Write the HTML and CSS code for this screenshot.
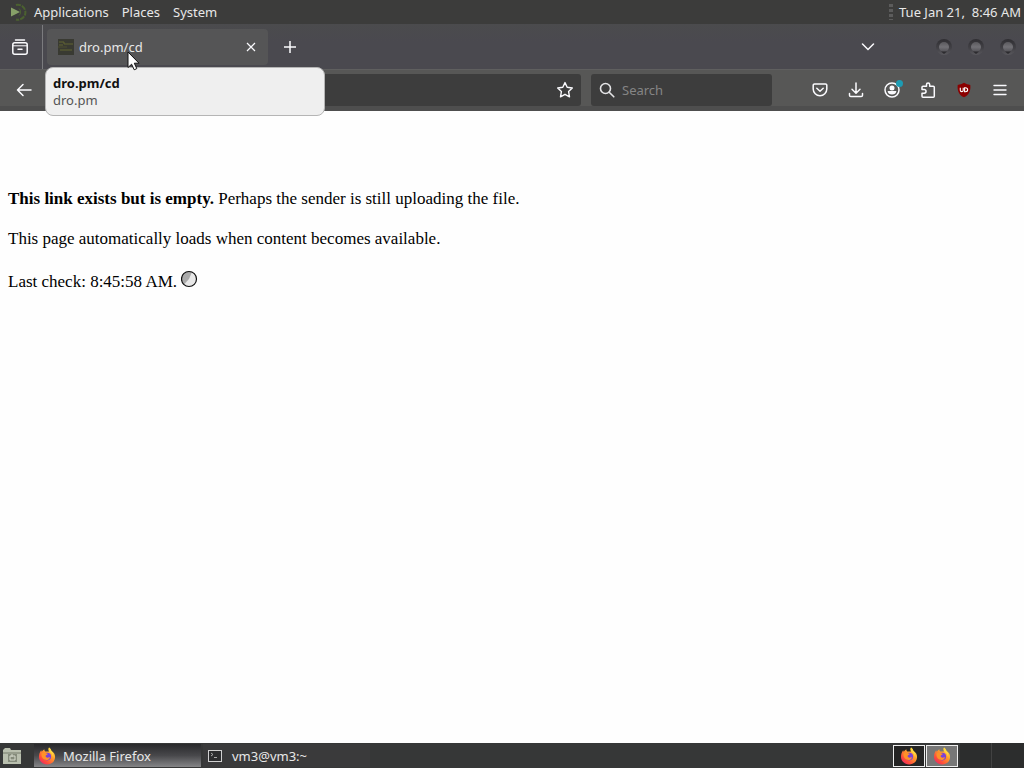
FILE: index.html
```html
<!DOCTYPE html>
<html lang="en">
<head>
    <meta charset="UTF-8">
    <meta name="viewport" content="width=device-width, initial-scale=1.0">
    <title>dro.pm/cd</title>
    <link rel="stylesheet" href="styles.css">
</head>
<body>
    <!-- Shared icons -->
    <svg class="defs" width="0" height="0" aria-hidden="true">
        <defs>
            <linearGradient id="flame" x1="1" y1="0" x2="0.2" y2="1">
                <stop offset="0" stop-color="#fff04a"/>
                <stop offset="0.45" stop-color="#ff9a2b"/>
                <stop offset="0.8" stop-color="#ff4a3c"/>
                <stop offset="1" stop-color="#e6286c"/>
            </linearGradient>
            <linearGradient id="knob" x1="0" y1="0" x2="0" y2="1">
                <stop offset="0" stop-color="#2f2e32"/>
                <stop offset="0.6" stop-color="#434247"/>
                <stop offset="1" stop-color="#59585d"/>
            </linearGradient>
            <linearGradient id="knobface" x1="0" y1="0" x2="0" y2="1">
                <stop offset="0" stop-color="#5a595d"/>
                <stop offset="0.5" stop-color="#727176"/>
                <stop offset="1" stop-color="#504f54"/>
            </linearGradient>
            <symbol id="firefox" viewBox="0 0 18 18">
                <path fill="url(#flame)" d="M11 .6c1.300 1 2 2 2.300 3.100 2.300 1.500 3.800 3.400 3.800 6.200 0 4.300-3.600 7.600-8 7.600S1 14.200 1 9.800C1 7.200 1.700 5 3.200 3.200l.5 1.500C4.500 3.500 5.500 2.700 6.400 2.300c-.1.900.2 1.700.9 2.200L11 4.600C10.300 3.200 10.300 1.800 11 .6z"/>
                <circle cx="9.300" cy="9.600" r="3.800" fill="#7a42d8"/>
                <path fill="#ff9228" d="M3.500 6.500c1.700-1.500 3.500-1 4.500-.2l1.800.5c0 1-1.300 1.200-2 1.700-.6.700.1 2 1.500 2.200 1.200.1 1.700-.7 2.700-.3-.8 2.300-3.400 3.300-5.600 2.200C4 11.500 3.200 9 3.500 6.500z"/>
                <path fill="#ffd93f" d="M11 .6c1.300 1 2 2 2.300 3.100 2 2 2.500 4.400 1.700 6.800-.2-2.600-1.200-4.200-2.800-5.300C10.500 4 10.300 2 11 .6z"/>
            </symbol>
            <symbol id="winknob" viewBox="0 0 18 18">
                <circle cx="9" cy="9" r="8" fill="url(#knob)"/>
                <circle cx="9" cy="9" r="5" fill="url(#knobface)"/>
                <path d="M6 13.500h6l-3 2.500z" fill="#2c2b2f"/>
            </symbol>
        </defs>
    </svg>

    <!-- Desktop panel -->
    <header class="panel">
        <svg class="panel-logo" width="20" height="20" viewBox="0 0 20 20">
            <path d="M3 5.500v9l9-4.500z" fill="#87a068"/>
            <path d="M8 3a7.500 7.500 0 1 1 0 14.500" fill="none" stroke="#4b6130" stroke-width="2" stroke-dasharray="5 1"/>
            <path d="M11 6.500a4.500 4.500 0 0 1 0 7" fill="none" stroke="#4b6130" stroke-width="1"/>
        </svg>
        <nav class="panel-menu">
            <a href="#">Applications</a>
            <a href="#">Places</a>
            <a href="#">System</a>
        </nav>
        <span class="grip"></span>
        <time class="clock">Tue Jan 21,&nbsp; 8:46 AM</time>
    </header>

    <!-- Tab strip -->
    <div class="tabbar">
        <button class="tabview" aria-label="View recent browsing">
            <svg width="18" height="18" viewBox="0 0 18 18" fill="none" stroke="#fbfbfe" stroke-width="1.500">
                <path d="M4.500 2h9" stroke-linecap="round"/>
                <rect x="1.800" y="4.800" width="14.400" height="11.400" rx="2"/>
                <path d="M2 7.800h14" stroke-width="1"/>
                <path d="M7 11.300h4" stroke-linecap="round"/>
            </svg>
        </button>
        <div class="tab">
            <svg width="16" height="16" viewBox="0 0 16 16">
                <rect width="16" height="16" fill="#393a32"/>
                <path d="M1 3h5v2h4M1 6h4M10 5h5M2 11h12" stroke="#626433" stroke-width="1" fill="none"/>
                <path d="M0 8h9" stroke="#4e4f31"/>
            </svg>
            <span class="tab-title">dro.pm/cd</span>
            <button class="tab-close" aria-label="Close tab">
                <svg width="10" height="10" viewBox="0 0 10 10" stroke="#fbfbfe" stroke-width="1.200"><path d="M1 1l8 8M9 1l-8 8"/></svg>
            </button>
            <div class="tooltip" role="tooltip">
                <strong>dro.pm/cd</strong>
                <span>dro.pm</span>
            </div>
            <svg class="pointer" width="13" height="20" viewBox="0 0 13 20">
                <path d="M1 1v15.500l3.600-3.300 2.600 5.600 2.600-1.200-2.500-5.400H12z" fill="#fff" stroke="#111" stroke-width="1"/>
            </svg>
        </div>
        <button class="newtab" aria-label="New tab">
            <svg width="14" height="14" viewBox="0 0 14 14" stroke="#fbfbfe" stroke-width="1.500"><path d="M7 1v12M1 7h12"/></svg>
        </button>
        <button class="alltabs" aria-label="List all tabs">
            <svg width="14" height="8" viewBox="0 0 14 8" fill="none" stroke="#fbfbfe" stroke-width="1.500" stroke-linecap="round"><path d="M1.500 1l5.500 5.500L12.500 1"/></svg>
        </button>
        <div class="wincontrols">
            <button aria-label="Minimize"><svg width="18" height="18"><use href="#winknob"/></svg></button>
            <button aria-label="Maximize"><svg width="18" height="18"><use href="#winknob"/></svg></button>
            <button aria-label="Close"><svg width="18" height="18"><use href="#winknob"/></svg></button>
        </div>
    </div>

    <!-- Navigation toolbar -->
    <div class="toolbar">
        <button class="back" aria-label="Back">
            <svg width="16" height="14" viewBox="0 0 16 14" fill="none" stroke="#fbfbfe" stroke-width="1.500" stroke-linecap="round" stroke-linejoin="round"><path d="M15 7H1.500M7 1.500L1.500 7 7 12.500"/></svg>
        </button>
        <div class="urlbar">
            <input type="text" aria-label="Address">
            <button aria-label="Bookmark this page">
                <svg width="18" height="18" viewBox="0 0 18 18" fill="none" stroke="#fbfbfe" stroke-width="1.400" stroke-linejoin="round"><path d="M9 1.600l2.200 4.700 5.100.7-3.700 3.600.9 5.200L9 13.300l-4.500 2.500.9-5.200L1.700 7l5.100-.7z"/></svg>
            </button>
        </div>
        <div class="searchbar">
            <svg width="16" height="16" viewBox="0 0 16 16" fill="none" stroke="#e4e4e6" stroke-width="1.600" stroke-linecap="round"><circle cx="6.500" cy="6.500" r="5"/><path d="M10.200 10.200l4.600 4.600"/></svg>
            <input type="text" placeholder="Search" aria-label="Search">
        </div>
        <div class="tools">
            <button aria-label="Save to Pocket">
                <svg width="16" height="16" viewBox="0 0 16 16" fill="none" stroke="#fbfbfe" stroke-width="1.500" stroke-linecap="round" stroke-linejoin="round"><path d="M2.500 2h11a1.300 1.300 0 0 1 1.300 1.300V7a6.800 6.800 0 0 1-13.600 0V3.300A1.300 1.300 0 0 1 2.500 2z"/><path d="M4.800 6.300L8 9.300l3.200-3"/></svg>
            </button>
            <button aria-label="Downloads">
                <svg width="16" height="16" viewBox="0 0 16 16" fill="none" stroke="#fbfbfe" stroke-width="1.500" stroke-linecap="round" stroke-linejoin="round"><path d="M8 1v10M4 7.200l4 4 4-4M1.500 11.500v1.700c0 .8.600 1.300 1.300 1.300h10.400c.8 0 1.300-.6 1.300-1.300v-1.700"/></svg>
            </button>
            <button class="account" aria-label="Account">
                <svg width="16" height="16" viewBox="0 0 16 16"><circle cx="8" cy="8" r="7" fill="none" stroke="#fbfbfe" stroke-width="1.500"/><circle cx="8" cy="6" r="2.500" fill="#fbfbfe"/><path d="M3.600 9h8.800c0 2.300-2.200 3.600-4.400 3.600S3.600 11.300 3.600 9z" fill="#fbfbfe"/></svg>
                <span class="badge"></span>
            </button>
            <button aria-label="Extensions">
                <svg width="16" height="16" viewBox="0 0 16 16" fill="none" stroke="#fbfbfe" stroke-width="1.500" stroke-linejoin="round"><path d="M2 7.500V5.200c0-.6.400-1 1-1h3.500V2.500a1.600 1.600 0 0 1 3.200 0v1.700h3.600c.6 0 1 .4 1 1v9c0 .6-.4 1-1 1H3c-.6 0-1-.4-1-1v-3h2.200a1.800 1.800 0 0 0 0-3.700H2z"/></svg>
            </button>
            <button aria-label="uBlock Origin">
                <svg width="16" height="16" viewBox="0 0 16 16"><path d="M8 .8c2 1.300 4 1.900 6.300 2.100C15 9 12.500 13.200 8 15.200 3.500 13.200 1 9 1.700 2.900 4 2.700 6 2.100 8 .8z" fill="#8b0000"/><path d="M4.300 5.800v2.500c0 1.800 2.900 1.800 2.900 0V5.800m1.400 0v3.900h.8c3 0 3-3.900 0-3.900z" fill="none" stroke="#fff" stroke-width="1.100"/></svg>
            </button>
            <button aria-label="Menu">
                <svg width="14" height="12" viewBox="0 0 14 12" stroke="#fbfbfe" stroke-width="1.400" stroke-linecap="round"><path d="M1 1.500h12M1 6h12M1 10.500h12"/></svg>
            </button>
        </div>
    </div>

    <!-- Page content -->
    <main class="content">
        <p><b>This link exists but is empty.</b> Perhaps the sender is still uploading the file.</p>
        <p>This page automatically loads when content becomes available.</p>
        <p>Last check: 8:45:58 AM.
            <svg class="spinner" width="17" height="18" viewBox="0 0 17 18">
                <circle cx="8" cy="9" r="7.500" fill="#e8e8e8"/>
                <path d="M8 9L3 14.500A7.500 7.500 0 0 1 11 2z" fill="#aaa"/>
                <circle cx="8" cy="9" r="7.500" fill="none" stroke="#111" stroke-width="1.200"/>
            </svg>
        </p>
    </main>

    <!-- Taskbar -->
    <footer class="taskbar">
        <button class="show-desktop" aria-label="Show desktop">
            <svg width="20" height="18" viewBox="0 0 20 18">
                <path d="M1 3l2-2h5l1 2h10v14H1z" fill="#b9bfae"/>
                <path d="M1 6h18" stroke="#757b6b"/>
                <rect x="6" y="7" width="9" height="8" fill="#858b7b"/>
                <path d="M8 9h5v4H8zM10 7v3" fill="none" stroke="#d5d9cc"/>
            </svg>
        </button>
        <button class="task active">
            <svg width="18" height="18"><use href="#firefox"/></svg>
            Mozilla Firefox
        </button>
        <button class="task">
            <svg width="18" height="16" viewBox="0 0 18 16"><rect x="1.500" y="2.500" width="13" height="11" fill="#2c2d2f" stroke="#d0d0d0"/><path d="M4 5l2 1.500L4 8M7 9.500h3" stroke="#aaa" fill="none"/></svg>
            vm3@vm3:~
        </button>
        <div class="pager">
            <button aria-label="Workspace 1"><svg width="18" height="18"><use href="#firefox"/></svg></button>
            <button class="current" aria-label="Workspace 2"><svg width="18" height="18"><use href="#firefox"/></svg></button>
        </div>
        <div class="tray"></div>
    </footer>
</body>
</html>
```
FILE: styles.css
```css
* {
    box-sizing: border-box;
}
body {
    margin: 0;
    min-height: 100vh;
    display: flex;
    flex-direction: column;
    font-family: "Noto Sans", sans-serif;
    font-size: 13px;
    color: #e8e8e8;
    background: #fefefe;
}
.defs {
    position: absolute;
}
button {
    display: flex;
    align-items: center;
    justify-content: center;
    padding: 0;
    border: 0;
    background: none;
    color: inherit;
    font: inherit;
}
input {
    flex: 1;
    min-width: 0;
    border: 0;
    outline: 0;
    background: none;
    color: #fbfbfe;
    font: inherit;
}

/* Desktop panel */
.panel {
    display: flex;
    align-items: center;
    height: 24px;
    padding: 0 3px 0 8px;
    background: #3c3c3b;
}
.panel-menu {
    display: flex;
    gap: 13px;
    margin-left: 6px;
}
.panel-menu a {
    color: #e8e8e8;
    text-decoration: none;
}
.grip {
    width: 4px;
    height: 16px;
    margin-left: auto;
    margin-right: 6px;
    background: repeating-linear-gradient(#5c5c5c 0 3px, #3c3c3b 3px 5px);
}

/* Tab strip */
.tabbar {
    display: flex;
    align-items: center;
    height: 45px;
    padding-top: 1px;
    background: linear-gradient(#4b4b4d, #4a494f 40%, #4a494f);
}
.tabview {
    width: 43px;
    height: 44px;
    padding-right: 2px;
    border-right: 1px solid #7b7b7e;
}
.tab {
    position: relative;
    display: flex;
    align-items: center;
    width: 221px;
    height: 36px;
    margin-left: 4px;
    padding: 0 10px 0 11px;
    border-radius: 4px;
    background: #555556;
}
.tab-title {
    flex: 1;
    margin-left: 5px;
}
.tab-close {
    width: 14px;
    height: 20px;
}
.tooltip {
    position: absolute;
    z-index: 1;
    top: 38px;
    left: -2px;
    display: flex;
    flex-direction: column;
    width: 280px;
    padding: 7px 7px 6px;
    border: 1px solid #b5b5b5;
    border-radius: 8px;
    background: #efefef;
    color: #555;
    line-height: 17px;
}
.tooltip strong {
    color: #111;
}
.pointer {
    position: absolute;
    z-index: 2;
    top: 22px;
    left: 80px;
}
.newtab {
    width: 36px;
    height: 36px;
    margin-left: 4px;
}
.alltabs {
    width: 36px;
    height: 36px;
    margin-left: auto;
}
.wincontrols {
    display: flex;
    gap: 14px;
    margin-left: 49px;
    padding-right: 7px;
}

/* Navigation toolbar */
.toolbar {
    display: flex;
    align-items: center;
    height: 42px;
    padding: 4px 6px 0;
    border-top: 1px solid #5f5f5f;
    border-bottom: 5px solid #4e4e4e;
    background: #575756;
}
.back {
    width: 36px;
    height: 32px;
}
.urlbar,
.searchbar {
    display: flex;
    align-items: center;
    height: 32px;
    border-radius: 3px;
    background: #3d3d3d;
}
.urlbar {
    flex: 1;
    margin-left: 110px;
}
.urlbar button {
    width: 32px;
    height: 32px;
}
.searchbar {
    width: 181px;
    margin-left: 10px;
    padding: 0 8px;
    gap: 5px;
}
.searchbar input::placeholder {
    color: #858585;
}
.tools {
    display: flex;
    margin-left: 30px;
}
.tools button {
    position: relative;
    width: 36px;
    height: 32px;
}
.badge {
    position: absolute;
    top: 6px;
    right: 7px;
    width: 7px;
    height: 7px;
    border-radius: 50%;
    background: #1d9cb4;
}

/* Page content */
.content {
    flex: 1;
    padding: 78px 8px 0;
    color: #000;
    font-family: "Liberation Serif", serif;
    font-size: 17px;
    line-height: 20px;
}
.content p {
    margin: 0 0 20px;
}
.spinner {
    margin-top: 1px;
    vertical-align: -1px;
}

/* Taskbar */
.taskbar {
    display: flex;
    align-items: center;
    gap: 2px;
    height: 25px;
    background: #363737;
}
.show-desktop {
    width: 32px;
    height: 25px;
    padding-right: 8px;
}
.task {
    justify-content: flex-start;
    gap: 7px;
    width: 167px;
    height: 23px;
    padding-left: 4px;
    background: #3a3a3b;
}
.task.active {
    background: linear-gradient(#29292b, #48484b 50%, #858587);
}
.pager {
    display: flex;
    gap: 1px;
    height: 22px;
    margin-left: auto;
}
.pager button {
    width: 32px;
    border: 1px solid #eee;
    background: #242424;
}
.pager .current {
    background: #777;
}
.tray {
    width: 64px;
    height: 25px;
    background: linear-gradient(90deg, #2c2d2d 31px, #424242 31px 32px, #2c2d2d 32px);
}
```
